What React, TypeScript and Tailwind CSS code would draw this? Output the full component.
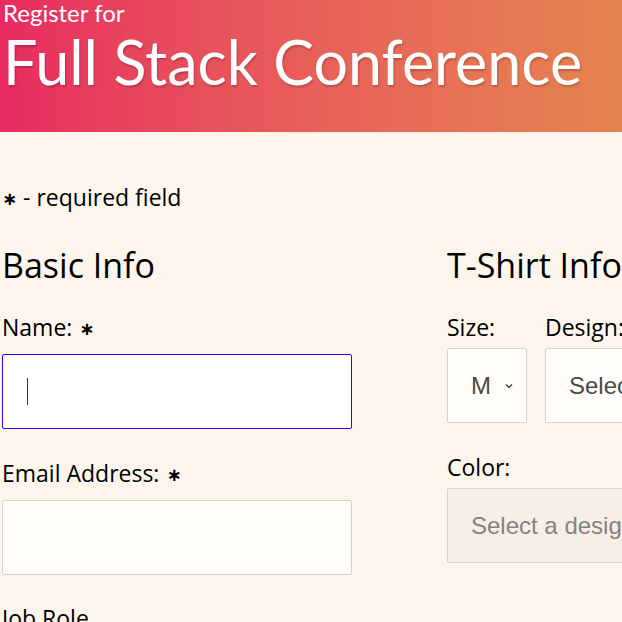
import React from "react";

const font = { fontFamily: "'Open Sans', 'Noto Sans', sans-serif" };
const heading = { fontFamily: "Lato, 'Noto Sans', sans-serif" };

const Star = () => (
  <span className="relative top-[-1px] ml-[7px] text-[18px] font-bold" style={{ fontFamily: "'DejaVu Sans', sans-serif" }}>
    ∗
  </span>
);

const Label = ({ text, req }: { text: string; req?: boolean }) => (
  <label className="block text-[23px] leading-none text-black whitespace-nowrap">
    {text}
    {req && <Star />}
  </label>
);

const Select = ({ text, w, disabled }: { text: string; w: string; disabled?: boolean }) => (
  <div
    className={`${w} h-[75px] shrink-0 flex items-center pl-[23px] rounded-[2px] border border-[#d6d1cb] ${disabled ? "bg-[#f6eee7] text-[#86827e]" : "bg-[#fffdf9] text-[#4a4a4a]"} text-[24px] overflow-hidden whitespace-nowrap`}
    style={{ fontFamily: "'Liberation Sans', Arial, sans-serif" }}
  >
    {text}
    {text === "M" && (
      <svg className="ml-[13px]" width="10" height="8" viewBox="0 0 10 8">
        <path d="M2 2.5 L5 5.5 L8 2.5" fill="none" stroke="#444" strokeWidth="1.4" />
      </svg>
    )}
  </div>
);

export default function App() {
  return (
    <div className="w-[622px] h-[622px] overflow-hidden bg-[#fcf5ec]" style={font}>
      <header className="h-[132px] px-[3px] bg-gradient-to-r from-[#e82a60] to-[#e5844f] text-white" style={heading}>
        <p className="text-[24px] leading-none pt-[1px]">Register for</p>
        <h1 className="text-[61px] leading-none mt-[6px] [text-shadow:1px_2px_2px_rgba(0,0,0,0.2)]">Full Stack Conference</h1>
      </header>

      <div className="px-[2px] pt-[54px]">
        <p className="text-[23px] leading-none">
          <span className="relative top-[-1px] text-[18px] font-bold" style={{ fontFamily: "'DejaVu Sans', sans-serif" }}>∗</span> - required field
        </p>
        <div className="flex gap-[95px] mt-[39px] w-[900px]">
          <section className="w-[350px] shrink-0">
            <h2 className="text-[34px] leading-none">Basic Info</h2>
            <div className="mt-[34px]">
              <Label text="Name:" req />
              <div className="mt-[15px] h-[75px] border border-[#3300ff] bg-white rounded-[2px] flex items-center pl-6">
                <span className="block w-px h-[27px] bg-[#333]" />
              </div>
            </div>
            <div className="mt-[33px]">
              <Label text="Email Address:" req />
              <div className="mt-[15px] h-[75px] border border-[#d6d1cb] bg-[#fffdf9] rounded-[2px]" />
            </div>
            <div className="mt-[32px]">
              <Label text="Job Role" />
            </div>
          </section>
          <section className="flex-1">
            <h2 className="text-[34px] leading-none whitespace-nowrap">T-Shirt Info</h2>
            <div className="flex gap-[18px] mt-[34px]">
              <div>
                <Label text="Size:" />
                <div className="mt-[9px]">
                  <Select text="M" w="w-[80px]" />
                </div>
              </div>
              <div>
                <Label text="Design:" />
                <div className="mt-[9px]">
                  <Select text="Select Theme" w="w-[250px]" />
                </div>
              </div>
            </div>
            <div className="mt-[33px]">
              <Label text="Color:" />
              <div className="mt-[9px]">
                <Select text="Select a design theme above" w="w-[350px]" disabled />
              </div>
            </div>
          </section>
        </div>
      </div>
    </div>
  );
}
